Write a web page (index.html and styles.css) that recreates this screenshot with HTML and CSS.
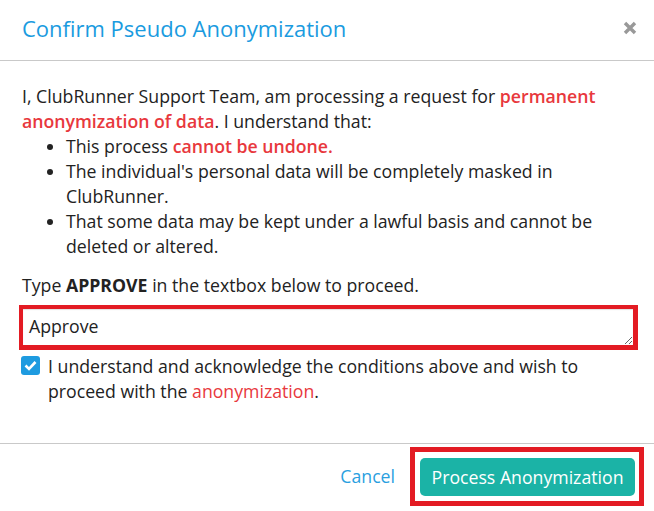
FILE: index.html
```html
<!DOCTYPE html>
<html>
<head>
<meta charset="utf-8">
<link rel="stylesheet" href="styles.css">
</head>
<body>
<div class="modal">
  <div class="modal-header">
    <h1 class="modal-title">Confirm Pseudo Anonymization</h1>
    <button class="close" aria-label="Close">
      <svg width="14" height="14" viewBox="0 0 14 14"><path d="M2 2 L12 12 M12 2 L2 12" stroke="#999" stroke-width="3.4" stroke-linecap="butt"/></svg>
    </button>
  </div>
  <div class="modal-body">
    <p>I, ClubRunner Support Team, am processing a request for <span class="warn strong">permanent anonymization of data</span>. I understand that:</p>
    <ul class="terms">
      <li>This process <span class="warn strong">cannot be undone.</span></li>
      <li>The individual's personal data will be completely masked in ClubRunner.</li>
      <li>That some data may be kept under a lawful basis and cannot be deleted or altered.</li>
    </ul>
    <p class="instruction">Type <strong>APPROVE</strong> in the textbox below to proceed.</p>
    <div class="highlight highlight-input">
      <textarea class="approve-input">Approve</textarea>
    </div>
    <label class="ack">
      <span class="checkbox"><svg width="13" height="11" viewBox="0 0 13 11"><path d="M1.5 5.5 L5 9 L11.5 2" fill="none" stroke="#fff" stroke-width="2.6"/></svg></span>
      <span class="ack-text">I understand and acknowledge the conditions above and wish to proceed with the <span class="warn">anonymization</span>.</span>
    </label>
  </div>
  <div class="modal-footer">
    <a class="cancel" href="#">Cancel</a>
    <div class="highlight highlight-btn">
      <button class="btn-process">Process Anonymization</button>
    </div>
  </div>
</div>
</body>
</html>
```

FILE: styles.css
```css
html, body {
  margin: 0;
  padding: 0;
  background: #fff;
}
body {
  font-family: "Open Sans", "Noto Sans", sans-serif;
  color: #222;
  font-size: 17.7px;
  line-height: 25px;
}
.modal {
  width: 654px;
}
.modal-header {
  display: flex;
  justify-content: space-between;
  align-items: center;
  padding: 14px 17px 18px 22px;
  border-bottom: 1px solid #c9c9c9;
}
.modal-title {
  margin: 0;
  font-size: 22px;
  line-height: 28px;
  font-weight: 400;
  color: #1a9be0;
}
.close {
  border: 0;
  background: none;
  padding: 0;
  width: 14px;
  height: 14px;
  display: flex;
  margin-top: -1px;
}
.modal-body {
  padding: 23px 22px 39px 22px;
}
.modal-body p {
  margin: 0;
}
.warn {
  color: #e8383d;
}
.strong {
  font-weight: 600;
}
.terms {
  margin: 0;
  padding-left: 44px;
}
.instruction {
  margin-top: 14px !important;
}
.instruction strong {
  font-weight: 700;
}
.highlight {
  border: 5px solid #e31b23;
}
.highlight-input {
  margin: 7px -6px 0 -3px;
  border-width: 4px 5px 5px 4px;
}
.approve-input {
  display: block;
  box-sizing: border-box;
  width: 100%;
  height: 36px;
  margin: 0;
  border: 0;
  padding: 5px 6px;
  font-family: "Open Sans", "Noto Sans", sans-serif;
  font-size: 17.7px;
  line-height: 25px;
  color: #222;
  box-shadow: inset 0 1px 1px rgba(0,0,0,0.12);
  resize: vertical;
  outline: none;
}
.ack {
  display: flex;
  align-items: flex-start;
  gap: 8px;
  margin-top: 4px;
  margin-left: -1px;
}
.checkbox {
  flex: none;
  width: 19px;
  height: 19px;
  margin-top: 2px;
  border-radius: 3px;
  background: #1e9be0;
  display: flex;
  align-items: center;
  justify-content: center;
}
.ack-text {
  flex: 1;
}
.modal-footer {
  border-top: 1px solid #c9c9c9;
  display: flex;
  justify-content: flex-end;
  align-items: center;
  gap: 15px;
  padding: 3px 10px 4px;
}
.cancel {
  color: #2a9fdf;
  text-decoration: none;
  font-size: 17.7px;
}
.highlight-btn {
  padding: 6px 4px 5px 5px;
}
.btn-process {
  display: block;
  height: 38px;
  width: 215px;
  border: 0;
  border-radius: 5px;
  background: #1bb3a6;
  color: #fff;
  font-family: "Open Sans", "Noto Sans", sans-serif;
  font-size: 17.7px;
  padding: 0 10px;
}
```
